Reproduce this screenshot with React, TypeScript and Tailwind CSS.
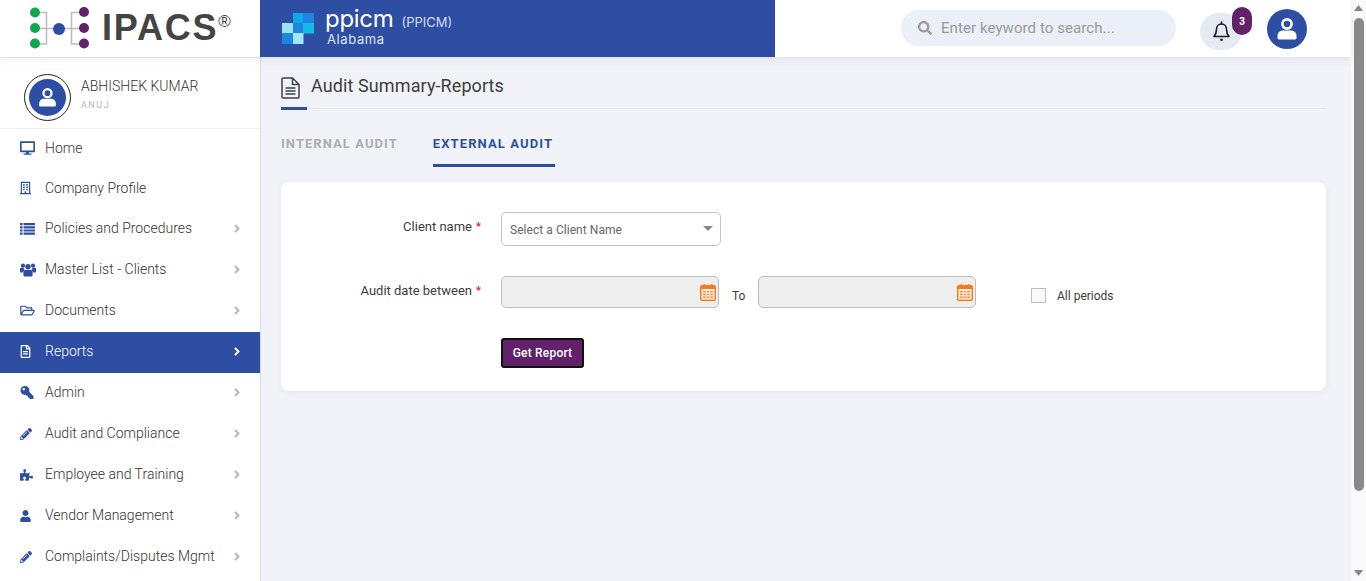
import {
  FaAngleRight,
  FaDesktop,
  FaKey,
  FaPencilAlt,
  FaPuzzlePiece,
  FaRegBuilding,
  FaRegFileAlt,
  FaRegFolderOpen,
  FaSearch,
  FaUser,
} from "react-icons/fa";
import type { ComponentType } from "react";

function ListGlyph({ className }: { className?: string }) {
  return (
    <svg viewBox="0 0 15 12" fill="currentColor" className={className}>
      <path d="M0 0h2.6v2.2H0zM3.6 0H15v2.2H3.6zM0 3.2h2.6v2.2H0zM3.6 3.2H15v2.2H3.6zM0 6.4h2.6v2.2H0zM3.6 6.4H15v2.2H3.6zM0 9.6h2.6v2.2H0zM3.6 9.6H15v2.2H3.6z" />
    </svg>
  );
}

function UsersGlyph({ className }: { className?: string }) {
  return (
    <svg viewBox="0 0 16 13" fill="currentColor" className={className}>
      <circle cx="3" cy="2.2" r="2.1" />
      <circle cx="13" cy="2.2" r="2.1" />
      <circle cx="8" cy="3.2" r="2.7" />
      <path d="M0 5.2c0-.6.5-1 1-1h2.4c.2 1 .7 1.7 1.3 2.3-1 .6-1.6 1.5-1.8 2.5H1c-.6 0-1-.4-1-1zM16 5.2c0-.6-.5-1-1-1h-2.4c-.2 1-.7 1.7-1.3 2.3 1 .6 1.6 1.5 1.8 2.5H15c.6 0 1-.4 1-1z" />
      <path d="M5.2 6.5h5.6c1 0 1.8.9 1.8 2v3c0 .9-.7 1.5-1.5 1.5H4.9c-.8 0-1.5-.6-1.5-1.5v-3c0-1.1.8-2 1.8-2z" />
    </svg>
  );
}

type NavItem = {
  label: string;
  icon: ComponentType<{ className?: string }>;
  iconClass: string;
  arrow?: boolean;
  active?: boolean;
  h: string;
};

const navItems: NavItem[] = [
  { label: "Home", icon: FaDesktop, iconClass: "h-[14px] w-[15px]", h: "h-[40px]" },
  { label: "Company Profile", icon: FaRegBuilding, iconClass: "h-[14px] w-[11px]", h: "h-[40px]" },
  { label: "Policies and Procedures", icon: ListGlyph, iconClass: "h-[12px] w-[15px]", arrow: true, h: "h-[41px]" },
  { label: "Master List - Clients", icon: UsersGlyph, iconClass: "h-[14px] w-[16px]", arrow: true, h: "h-[41px]" },
  { label: "Documents", icon: FaRegFolderOpen, iconClass: "h-[13px] w-[15px]", arrow: true, h: "h-[41px]" },
  { label: "Reports", icon: FaRegFileAlt, iconClass: "h-[13px] w-[11px]", arrow: true, active: true, h: "h-[41px]" },
  { label: "Admin", icon: FaKey, iconClass: "h-[13px] w-[14px] -scale-x-100", arrow: true, h: "h-[41px]" },
  { label: "Audit and Compliance", icon: FaPencilAlt, iconClass: "h-[12px] w-[12px]", arrow: true, h: "h-[41px]" },
  { label: "Employee and Training", icon: FaPuzzlePiece, iconClass: "h-[12px] w-[13px]", arrow: true, h: "h-[41px]" },
  { label: "Vendor Management", icon: FaUser, iconClass: "h-[12px] w-[11px]", arrow: true, h: "h-[41px]" },
  { label: "Complaints/Disputes Mgmt", icon: FaPencilAlt, iconClass: "h-[12px] w-[12px]", arrow: true, h: "h-[41px]" },
];

function IpacsMark() {
  return (
    <svg width="66" height="46" viewBox="0 0 66 46" className="shrink-0">
      <g fill="none" stroke="#bcbcbc" strokeWidth="1.5">
        <path d="M6 6.5h11.5v31.5H6M6 22.5h50M55 6.5H42.500v31.500H55" />
      </g>
      <circle cx="6" cy="6.500" r="5" fill="#11a650" />
      <circle cx="6" cy="22" r="5" fill="#11a650" />
      <circle cx="6" cy="37.500" r="5" fill="#11a650" />
      <circle cx="30" cy="23" r="6" fill="#2d4ea2" />
      <circle cx="55" cy="6" r="5" fill="#62226a" />
      <circle cx="55" cy="22" r="5" fill="#62226a" />
      <circle cx="55" cy="37.500" r="5" fill="#62226a" />
    </svg>
  );
}

function PpicmMark() {
  return (
    <svg width="32" height="31" viewBox="0 0 32 31" className="shrink-0">
      <rect x="11" y="0" width="10.500" height="10.500" fill="#0fa8e6" />
      <rect x="21" y="0" width="11" height="10.500" fill="#1c86e2" />
      <rect x="0" y="10" width="11" height="10.500" fill="#9ae3f8" />
      <rect x="11" y="10" width="10.500" height="10.500" fill="#1c86e2" />
      <rect x="21" y="10" width="11" height="10.500" fill="#10bdea" />
      <rect x="0" y="20" width="11" height="11" fill="#1c86e2" />
      <rect x="11" y="20" width="10.500" height="11" fill="#a2e6f9" />
    </svg>
  );
}

function PersonGlyph({ className }: { className?: string }) {
  return (
    <svg viewBox="0 0 24 24" fill="currentColor" className={className}>
      <circle cx="12" cy="7" r="4.600" fill="none" stroke="currentColor" strokeWidth="2.600" />
      <path d="M2.500 21v-2.200c0-3.200 2.600-5.300 5.600-5.300h7.800c3 0 5.600 2.100 5.600 5.300V21c0 .8-.6 1.400-1.400 1.400H3.900c-.8 0-1.400-.6-1.400-1.400z" />
    </svg>
  );
}

function BellGlyph() {
  return (
    <svg width="17" height="21" viewBox="0 0 17 21" fill="none" stroke="#1c1c1c" strokeWidth="1.600">
      <path d="M8.500 3c-3 0-5 2.200-5 5.200 0 4-1 5.600-2.500 7.300h15c-1.500-1.700-2.500-3.300-2.500-7.300 0-3-2-5.200-5-5.200z" strokeLinejoin="round" />
      <path d="M8.500 3V1" strokeLinecap="round" />
      <circle cx="8.500" cy="18.800" r="1.300" fill="#1c1c1c" stroke="none" />
    </svg>
  );
}

function PageGlyph() {
  return (
    <svg width="19" height="22" viewBox="0 0 19 22" fill="none" stroke="#39404f" strokeWidth="1.500" className="shrink-0">
      <path d="M1 2c0-.6.4-1 1-1h9.500L18 7.500V20c0 .6-.4 1-1 1H2c-.6 0-1-.4-1-1z" strokeLinejoin="round" />
      <path d="M11.500 1v6.500H18" strokeLinejoin="round" />
      <path d="M4.500 11h10M4.500 14h10M4.500 17h10" />
    </svg>
  );
}

function CalendarGlyph() {
  return (
    <svg width="16" height="17" viewBox="0 0 16 17" className="shrink-0">
      <rect x="0" y="1" width="16" height="16" rx="2" fill="#fb7a14" />
      <rect x="1.500" y="5" width="13" height="10.500" fill="#fff4ea" />
      <rect x="3.500" y="0" width="1.500" height="3.500" fill="#fb7a14" />
      <rect x="11" y="0" width="1.500" height="3.500" fill="#fb7a14" />
      <path d="M3 7h10v1.600H3zM3 9.700h10v1.600H3zM3 12.400h10V14H3z" fill="#fb8f3c" />
      <path d="M6 7h.8v7H6zM9.200 7h.8v7h-.8z" fill="#fff4ea" />
    </svg>
  );
}

function DateInput() {
  return (
    <div className="flex h-[32px] w-[218px] items-center justify-end rounded-[5px] border border-[#bdbdbd] bg-[#eeeeee] pr-[2px]">
      <CalendarGlyph />
    </div>
  );
}

function Required() {
  return <span className="ml-[4px] text-[11px] font-bold text-[#f0142f]">*</span>;
}

export default function App() {
  return (
    <div className="flex h-[581px] w-[1366px] overflow-hidden bg-[#f2f3f8] font-['Roboto',sans-serif] text-[#444]">
      <div className="flex min-w-0 flex-1 flex-col">
        <header className="z-10 flex h-[57px] shrink-0 bg-white shadow-[0_2px_8px_rgba(60,70,110,0.10)]">
          <div className="flex w-[260px] shrink-0 items-center pl-[29px]">
            <IpacsMark />
            <span className="mb-[2px] ml-[7px] font-['Liberation_Sans',sans-serif] text-[36px] leading-none font-bold tracking-[1.8px] text-[#444]">
              IPACS
            </span>
            <span className="mb-[15px] font-['Liberation_Sans',sans-serif] text-[17px] leading-none text-[#444]">
              ®
            </span>
          </div>
          <div className="flex w-[515px] shrink-0 items-center bg-[#2d4ea2] pl-[22px] text-white">
            <PpicmMark />
            <div className="ml-[11px] flex -translate-y-[3px] flex-col">
              <div className="flex items-baseline font-['Inter',sans-serif]">
                <span className="text-[24px] leading-[26px] font-normal tracking-[-0.3px]">ppicm</span>
                <span className="ml-[8px] text-[13px] leading-none text-[#d5ddf0]">(PPICM)</span>
              </div>
              <span className="ml-[2px] font-['Inter',sans-serif] text-[13px] leading-[14px] tracking-[0.6px] text-[#dfe6f5]">
                Alabama
              </span>
            </div>
          </div>
          <div className="flex flex-1 items-start pl-[126px]">
            <div className="mt-[10px] flex h-[36px] w-[275px] items-center rounded-full bg-[#ebeff8] pl-[17px]">
              <FaSearch className="h-[14px] w-[14px] text-[#9a9a9a]" />
              <span className="ml-[9px] text-[15px] tracking-[0.08px] text-[#9a9a9a]">Enter keyword to search...</span>
            </div>
            <div className="relative mt-[13px] ml-[24px] flex h-[37px] w-[42px] items-center justify-center rounded-full bg-[#e4ebf3]">
              <BellGlyph />
              <span className="absolute top-[-6px] right-[-10px] flex h-[28px] w-[20px] items-center justify-center rounded-full bg-[#62226a] text-[10px] font-bold text-white">
                3
              </span>
            </div>
            <div className="mt-[9px] ml-[25px] flex h-[40px] w-[40px] items-center justify-center rounded-full bg-[#2d4ea2]">
              <PersonGlyph className="h-[24px] w-[24px] text-white" />
            </div>
          </div>
        </header>

        <div className="flex min-h-0 flex-1">
          <aside className="w-[261px] shrink-0 border-r border-[#d5d8ec] bg-white">
            <div className="flex h-[72px] items-start border-y border-[#eeeff4] pt-[16px] pl-[24px]">
              <div className="flex h-[47px] w-[47px] items-center justify-center rounded-full border border-[#222] bg-white">
                <div className="flex h-[37px] w-[37px] items-center justify-center rounded-full bg-[#2d4ea2]">
                  <PersonGlyph className="h-[21px] w-[21px] text-white" />
                </div>
              </div>
              <div className="mt-[3px] ml-[10px]">
                <p className="text-[14px] leading-[18px] font-light text-[#333]">ABHISHEK KUMAR</p>
                <p className="mt-[4px] text-[9px] leading-[12px] tracking-[1.5px] text-[#b5b5b5]">ANUJ</p>
              </div>
            </div>
            <nav>
              {navItems.map((item) => {
                const Icon = item.icon;
                return (
                  <div
                    key={item.label}
                    className={`flex items-center pr-[19px] pb-[2px] pl-[20px] ${item.h} ${
                      item.active ? "bg-[#2d4ea2] text-white" : "text-[#333]"
                    }`}
                  >
                    <span className="flex w-[25px] shrink-0">
                      <Icon className={`${item.iconClass} ${item.active ? "text-white" : "text-[#2d4ea2]"}`} />
                    </span>
                    <span className="flex-1 text-[14px] font-light">{item.label}</span>
                    {item.arrow && (
                      <FaAngleRight
                        className={`h-[13px] w-[8px] ${item.active ? "text-white" : "text-[#b8b8b8]"}`}
                      />
                    )}
                  </div>
                );
              })}
            </nav>
          </aside>

          <main className="min-w-0 flex-1 pr-[25px] pl-[20px]">
            <div className="relative flex h-[52px] items-start border-b border-[#e6e7ed] pt-[20px]">
              <PageGlyph />
              <h1 className="ml-[11px] text-[18px] leading-[18px] tracking-[0.1px] text-[#3d3d3d]">Audit Summary-Reports</h1>
              <span className="absolute bottom-[-2px] left-0 h-[3px] w-[26px] bg-[#2d4ea2]" />
            </div>

            <div className="mt-[15px] flex h-[43px] gap-[35px]">
              <div className="flex h-full items-center pb-[4px] text-[13px] font-bold tracking-[1.05px] text-[#acadb3]">
                INTERNAL AUDIT
              </div>
              <div className="flex h-full items-center border-b-[3px] border-[#2d4ea2] pr-[2px] pb-[1px] text-[13px] font-bold tracking-[1.1px] text-[#2d4ea2]">
                EXTERNAL AUDIT
              </div>
            </div>

            <section className="mt-[15px] h-[209px] rounded-[8px] bg-white pt-[30px] shadow-[0_2px_6px_rgba(60,70,110,0.07)]">
              <div className="flex h-[34px]">
                <div className="flex h-[30px] w-[200px] items-center justify-end text-[13px] text-[#3d3d3d]">
                  Client name
                  <Required />
                </div>
                <div className="relative ml-[20px] flex h-[34px] w-[220px] items-center rounded-[5px] border border-[#c4c4c4] bg-white pt-[2px] pl-[8px] text-[12px] tracking-[0.05px] text-[#666]">
                  Select a Client Name
                  <span className="absolute top-[13px] right-[7px] h-0 w-0 border-x-[5px] border-t-[5px] border-x-transparent border-t-[#888]" />
                </div>
              </div>

              <div className="mt-[30px] flex h-[32px]">
                <div className="flex h-[30px] w-[200px] items-center justify-end text-[13px] text-[#3d3d3d]">
                  Audit date between
                  <Required />
                </div>
                <div className="ml-[20px]">
                  <DateInput />
                </div>
                <div className="flex w-[39px] items-center pt-[7px] pl-[13px] text-[12px] text-[#3d3d3d]">To</div>
                <DateInput />
                <div className="ml-[55px] flex items-center pt-[7px]">
                  <span className="h-[15px] w-[15px] border border-[#bdbdbd] bg-[#f9f9f9]" />
                  <span className="ml-[11px] text-[12px] text-[#3d3d3d]">All periods</span>
                </div>
              </div>

              <div className="mt-[30px] pl-[220px]">
                <button className="h-[30px] w-[83px] rounded-[3px] border-2 border-[#111] bg-[#62226a] text-[12px] font-medium tracking-[0.2px] text-white">
                  Get Report
                </button>
              </div>
            </section>
          </main>
        </div>
      </div>

      <div className="flex w-[15px] shrink-0 flex-col items-center bg-[#fafafa]">
        <svg width="9" height="6" viewBox="0 0 9 6" className="mt-[5px] shrink-0">
          <path d="M4.500 0 9 6H0z" fill="#858585" />
        </svg>
        <div className="mt-[7px] h-[473px] w-[10px] shrink-0 rounded-[5px] bg-[#8a8a8a]" />
        <svg width="9" height="6" viewBox="0 0 9 6" className="mt-auto mb-[5px] shrink-0">
          <path d="M4.500 6 9 0H0z" fill="#858585" />
        </svg>
      </div>
    </div>
  );
}
